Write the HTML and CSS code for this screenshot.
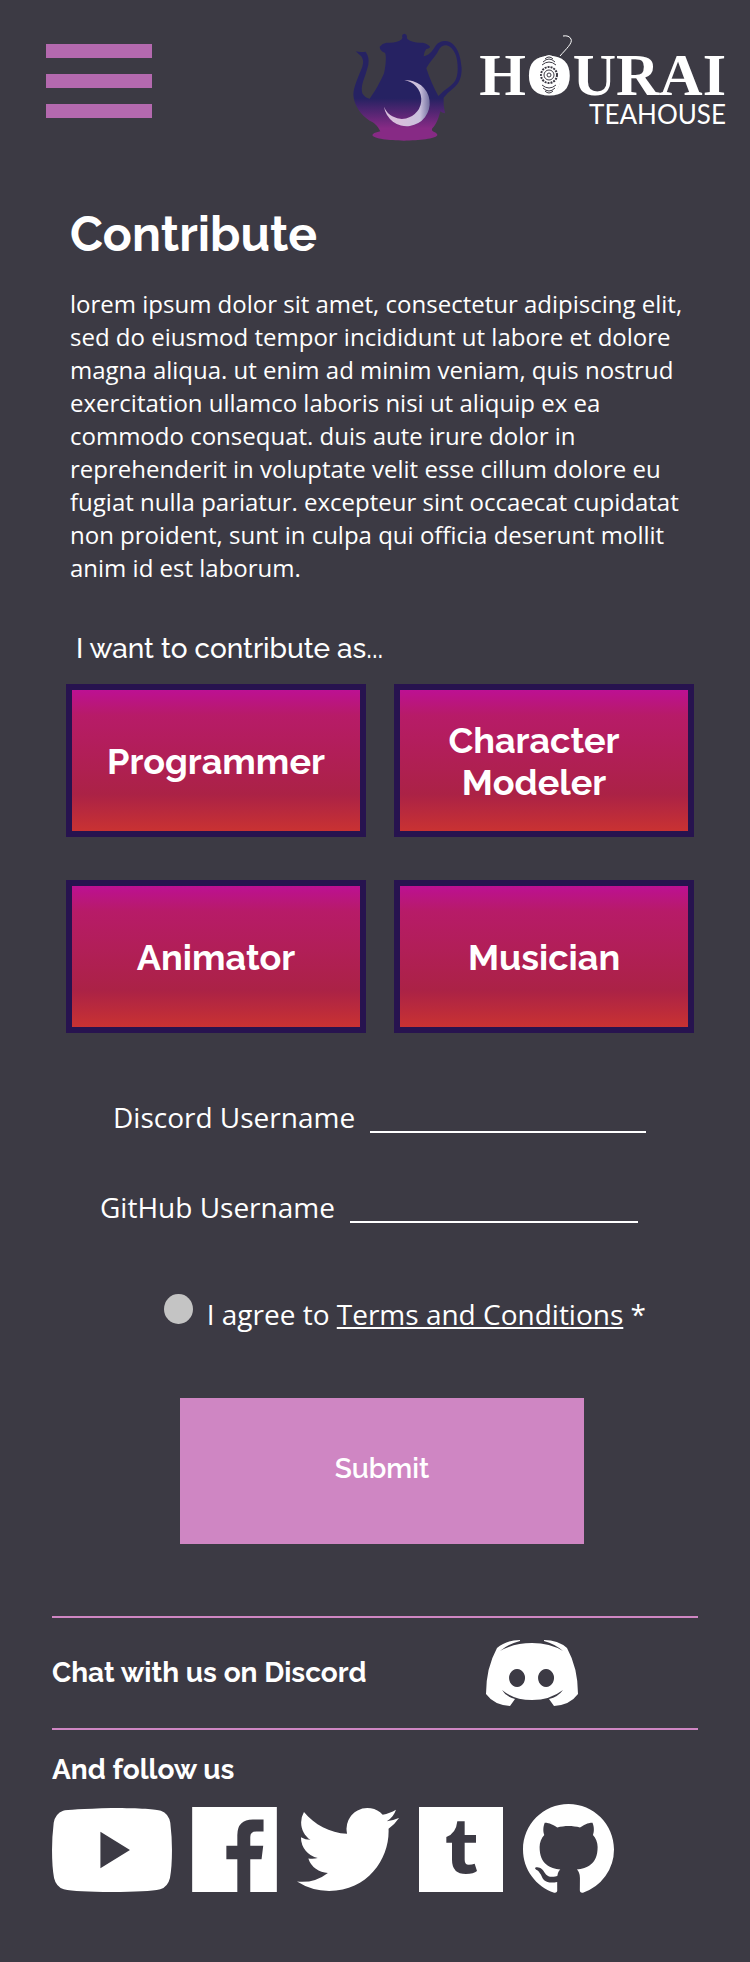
FILE: index.html
```html
<!DOCTYPE html>
<html lang="en">
<head>
<meta charset="utf-8">
<meta name="viewport" content="width=device-width, initial-scale=1">
<title>Contribute - Hourai Teahouse</title>
<link rel="stylesheet" href="styles.css">
</head>
<body>
<header class="site-header">
  <button class="menu" type="button" aria-label="Menu"><span class="bar"></span><span class="bar"></span><span class="bar"></span></button>
  <a class="brand" href="#">
    <svg class="pot" viewBox="0 0 420 390" aria-hidden="true">
      <defs>
        <linearGradient id="tea" gradientUnits="userSpaceOnUse" x1="0" y1="235" x2="0" y2="325"><stop offset="0" stop-color="#262262"/><stop offset="1" stop-color="#872a85"/></linearGradient>
        <linearGradient id="moon" gradientUnits="userSpaceOnUse" x1="185" y1="250" x2="274" y2="250"><stop offset="0" stop-color="#d8bfdc"/><stop offset=".65" stop-color="#c9c0dc"/><stop offset="1" stop-color="#6d6a9c"/></linearGradient>
      </defs>
      <path fill="url(#tea)" fill-rule="evenodd" d="M50 94Q66 98 80 95Q92 112 88 135Q80 165 72 185Q66 205 70 220Q78 234 92 236C108 215 124 185 135 160C142 130 142 100 137 98Q122 92 122 80Q130 70 142 68Q175 70 188 58Q192 52 189 48Q190 41 197 41Q204 43 204 50Q202 54 206 58Q222 70 252 68Q268 72 273 80Q272 86 262 87Q254 97 254 109C270 105 278 95 286 83C295 68 305 63 320 63C350 66 365 100 368 145C368 175 360 190 345 203Q325 218 314 233Q312 255 318 280Q308 278 304 274C298 300 290 315 280 325Q276 332 284 335Q296 340 295 346C290 356 240 362 195 362C150 362 105 356 100 346Q100 339 124 334C115 315 105 308 92 302C65 285 45 255 43 225C43 200 60 165 70 140Q76 120 66 108Q58 102 50 94ZM262 145C275 120 290 110 298 92Q306 76 322 76C345 82 357 110 356 148C355 180 345 190 330 201Q312 213 298 228C285 205 272 175 262 145Z"/>
      <path fill="url(#moon)" d="M196 181A69 69 0 1 1 135 260A58 58 0 1 0 196 181Z"/>
    </svg>
    <span class="wordmark">
      <span class="name">HOURAI</span>
      <span class="sub">TEAHOUSE</span>
      <svg class="mandala" viewBox="0 0 40 64" aria-hidden="true">
        <ellipse cx="20" cy="40" rx="12" ry="20" fill="#fff"/>
        <g fill="none" stroke="#3c3a44" stroke-width="1">
          <circle cx="20" cy="40" r="2"/><circle cx="20" cy="40" r="5"/><circle cx="20" cy="40" r="8" stroke-width="2" stroke-dasharray="2 1"/>
          <path d="M13 30Q20 24 27 30M14 27Q20 21 26 27M16 24Q20 20 24 24M13 50Q20 56 27 50M14 53Q20 59 26 53M16 56Q20 60 24 56"/>
        </g>
        <path d="M31 21C37 14 44 8 42 4Q40 0 34 1" fill="none" stroke="#fff" stroke-width="1"/>
      </svg>
    </span>
  </a>
</header>

<main class="content">
  <h1 class="title">Contribute</h1>
  <p class="intro">lorem ipsum dolor sit amet, consectetur adipiscing elit, sed do eiusmod tempor incididunt ut labore et dolore magna aliqua. ut enim ad minim veniam, quis nostrud exercitation ullamco laboris nisi ut aliquip ex ea commodo consequat. duis aute irure dolor in reprehenderit in voluptate velit esse cillum dolore eu fugiat nulla pariatur. excepteur sint occaecat cupidatat non proident, sunt in culpa qui officia deserunt mollit anim id est laborum.</p>
  <h2 class="prompt">I want to contribute as...</h2>
  <div class="roles">
    <button class="role" type="button">Programmer</button>
    <button class="role role-long" type="button">Character Modeler</button>
    <button class="role" type="button">Animator</button>
    <button class="role" type="button">Musician</button>
  </div>
  <form class="form">
    <div class="field field-discord"><label for="discord">Discord Username</label><input id="discord" type="text"></div>
    <div class="field field-github"><label for="github">GitHub Username</label><input id="github" type="text"></div>
    <div class="agree"><input id="agree" type="checkbox"><label for="agree">I agree to <a href="#">Terms and Conditions</a> *</label></div>
    <button class="submit" type="submit">Submit</button>
  </form>
</main>

<footer class="site-footer">
  <div class="chat">
    <h2 class="footer-title">Chat with us on Discord</h2>
    <a class="discord" href="#" aria-label="Discord"><svg viewBox="0 0 92 66"><path fill-rule="evenodd" d="M11 8Q20 0 34 0L34 1Q22 4 14 11Q28 3 46 3Q64 3 77 11Q69 4 58 1L58 0Q72 0 81 8Q92 28 92 54Q84 65 68 66L63 59Q72 57 77 50Q64 60 46 60Q28 60 16 50Q20 57 29 59L24 66Q8 65 0 54Q0 28 11 8ZM31 29a8 9 0 1 0 .1 0ZM60 29a8 9 0 1 0 .1 0Z"/></svg></a>
  </div>
  <h2 class="footer-title follow-title">And follow us</h2>
  <nav class="social" aria-label="Social media">
    <a class="youtube" href="#" aria-label="YouTube"><svg viewBox="36 64 357 250"><path fill-rule="evenodd" d="M214 64C300 64 345 68 360 72Q383 80 388 108Q393 150 393 189Q393 240 387 272Q381 298 358 306Q320 314 214 314Q109 314 71 306Q48 298 42 272Q36 240 36 189Q36 150 41 108Q46 80 69 72Q84 68 214 64ZM180 135V243L268 189Z"/></svg></a>
    <a class="facebook" href="#" aria-label="Facebook"><svg viewBox="459 50 255 256"><path fill-rule="evenodd" d="M459 50H714V306H634V207H668L673 167H634V140Q634 124 652 124H674V88H642Q595 88 595 135V167H562V207H595V306H459Z"/></svg></a>
    <a class="twitter" href="#" aria-label="Twitter"><svg viewBox="0 2 24 20"><path d="M23.953 4.57a10 10 0 01-2.825.775 4.958 4.958 0 002.163-2.723c-.951.555-2.005.959-3.127 1.184a4.92 4.92 0 00-8.384 4.482C7.69 8.095 4.067 6.13 1.64 3.162a4.822 4.822 0 00-.666 2.475c0 1.71.87 3.213 2.188 4.096a4.904 4.904 0 01-2.228-.616v.06a4.923 4.923 0 003.946 4.827 4.996 4.996 0 01-2.212.085 4.936 4.936 0 004.604 3.417 9.867 9.867 0 01-6.102 2.105c-.39 0-.779-.023-1.17-.067a13.995 13.995 0 007.557 2.209c9.053 0 13.998-7.496 13.998-13.985 0-.21 0-.42-.015-.63A9.935 9.935 0 0024 4.59z"/></svg></a>
    <a class="tumblr" href="#" aria-label="Tumblr"><svg viewBox="411 42 252 255"><path fill-rule="evenodd" d="M411 42H663V297H411ZM526 85H548V126H582V149H548V200Q548 215 560 215Q570 215 578 212L585 234Q575 243 552 243Q510 243 510 200V149H493V132Q522 122 526 85Z"/></svg></a>
    <a class="github" href="#" aria-label="GitHub"><svg viewBox="0 0 16 16"><path d="M8 0C3.58 0 0 3.58 0 8c0 3.54 2.29 6.53 5.47 7.59.4.07.55-.17.55-.38 0-.19-.01-.82-.01-1.49-2.01.37-2.53-.49-2.69-.94-.09-.23-.48-.94-.82-1.13-.28-.15-.68-.52-.01-.53.63-.01 1.08.58 1.23.82.72 1.21 1.87.87 2.33.66.07-.52.28-.87.51-1.07-1.78-.2-3.64-.89-3.64-3.95 0-.87.31-1.59.82-2.15-.08-.2-.36-1.02.08-2.12 0 0 .67-.21 2.2.82.64-.18 1.32-.27 2-.27.68 0 1.36.09 2 .27 1.53-1.04 2.2-.82 2.2-.82.44 1.1.16 1.92.08 2.12.51.56.82 1.27.82 2.15 0 3.07-1.87 3.75-3.65 3.95.29.25.54.73.54 1.48 0 1.07-.01 1.93-.01 2.2 0 .21.15.46.55.38A8.013 8.013 0 0016 8c0-4.42-3.58-8-8-8z"/></svg></a>
  </nav>
</footer>
</body>
</html>
```
FILE: styles.css
```css
* { box-sizing: border-box; }
body {
  margin: 0;
  background: #3c3a44;
  color: #fff;
  font-family: "Open Sans", "Noto Sans", sans-serif;
}
h1, h2, p { margin: 0; }
a { color: inherit; }
button { font-family: Raleway, Lato, sans-serif; color: inherit; cursor: pointer; }
svg { display: block; width: 100%; height: 100%; fill: #fff; }

.site-header {
  display: flex;
  justify-content: space-between;
  align-items: flex-start;
  padding: 20px 24px 0 46px;
}
.menu {
  display: flex;
  flex-direction: column;
  gap: 16px;
  width: 106px;
  margin-top: 24px;
  padding: 0;
  border: 0;
  background: none;
}
.bar { height: 14px; background: #b469af; }
.brand { display: flex; text-decoration: none; }
.brand .pot { width: 140px; height: 130px; }
.wordmark {
  position: relative;
  display: flex;
  flex-direction: column;
  align-items: flex-end;
  padding-top: 29px;
}
.name { font: bold 60px/52px "Liberation Serif", serif; }
/* Ornament laid over the letter O */
.mandala { position: absolute; left: 50px; top: 15px; width: 40px; height: 64px; overflow: visible; }
.sub { font: 26px/26px Lato, sans-serif; }

.content { padding: 54px 56px 0 66px; }
.title {
  padding-left: 4px;
  font: bold 48px/60px Raleway, Lato, sans-serif;
}
.intro { margin-top: 23px; padding: 0 4px; font-size: 24px; line-height: 33px; }
.prompt {
  margin-top: 48px;
  padding-left: 10px;
  font: 500 28px/34px Raleway, Lato, sans-serif;
}
.roles {
  display: grid;
  grid-template-columns: 1fr 1fr;
  gap: 43px 28px;
  margin-top: 18px;
}
.role {
  min-height: 153px;
  padding: 0 16px;
  border: 6px solid #27134f;
  background: linear-gradient(#bd1093, #b71b68 18%, #ab2246 74%, #c93232) padding-box;
  font-size: 36px;
  line-height: 42px;
  font-weight: bold;
}
.role-long { padding: 0 60px 0 40px; }

.form { display: flex; flex-direction: column; padding: 65px 48px 0 34px; font-size: 28px; line-height: 38px; }
.field { display: flex; gap: 15px; }
.field input {
  flex: 1;
  min-width: 0;
  height: 35px;
  padding: 0;
  border: 0;
  border-bottom: 2px solid #fff;
  background: none;
  color: inherit;
  font: inherit;
  outline: 0;
}
.field-discord { padding-left: 13px; }
.field-github { margin-top: 52px; padding-right: 8px; }
.agree { display: flex; align-items: flex-start; gap: 14px; margin: 68px 0 0 64px; white-space: nowrap; }
.agree input {
  appearance: none;
  width: 30px;
  height: 30px;
  margin: 0;
  border-radius: 50%;
  background: #c4c4c4;
}
.agree input:checked { background: #cf86c3; }
.agree label { padding-top: 1px; }
.submit {
  align-self: center;
  width: 74%;
  height: 146px;
  margin: 65px 0 0 18px;
  padding: 0 0 6px;
  border: 0;
  background: #cf86c3;
  font-size: 28px;
  font-weight: 600;
}

.site-footer { margin: 72px 52px 0; padding-bottom: 66px; }
.chat {
  display: flex;
  justify-content: space-between;
  align-items: center;
  height: 114px;
  padding-right: 120px;
  border-top: 2px solid #cf86c3;
  border-bottom: 2px solid #cf86c3;
}
.footer-title { font: bold 28px/34px Raleway, Lato, sans-serif; }
.discord { width: 92px; height: 66px; }
.follow-title { margin-top: 23px; }
.social { display: flex; align-items: center; gap: 20px; margin-top: 17px; }
.youtube { width: 120px; height: 84px; }
.facebook { width: 85px; height: 85px; }
.twitter { width: 102px; height: 85px; }
.tumblr { width: 84px; height: 85px; }
.github { width: 91px; height: 91px; }
```
